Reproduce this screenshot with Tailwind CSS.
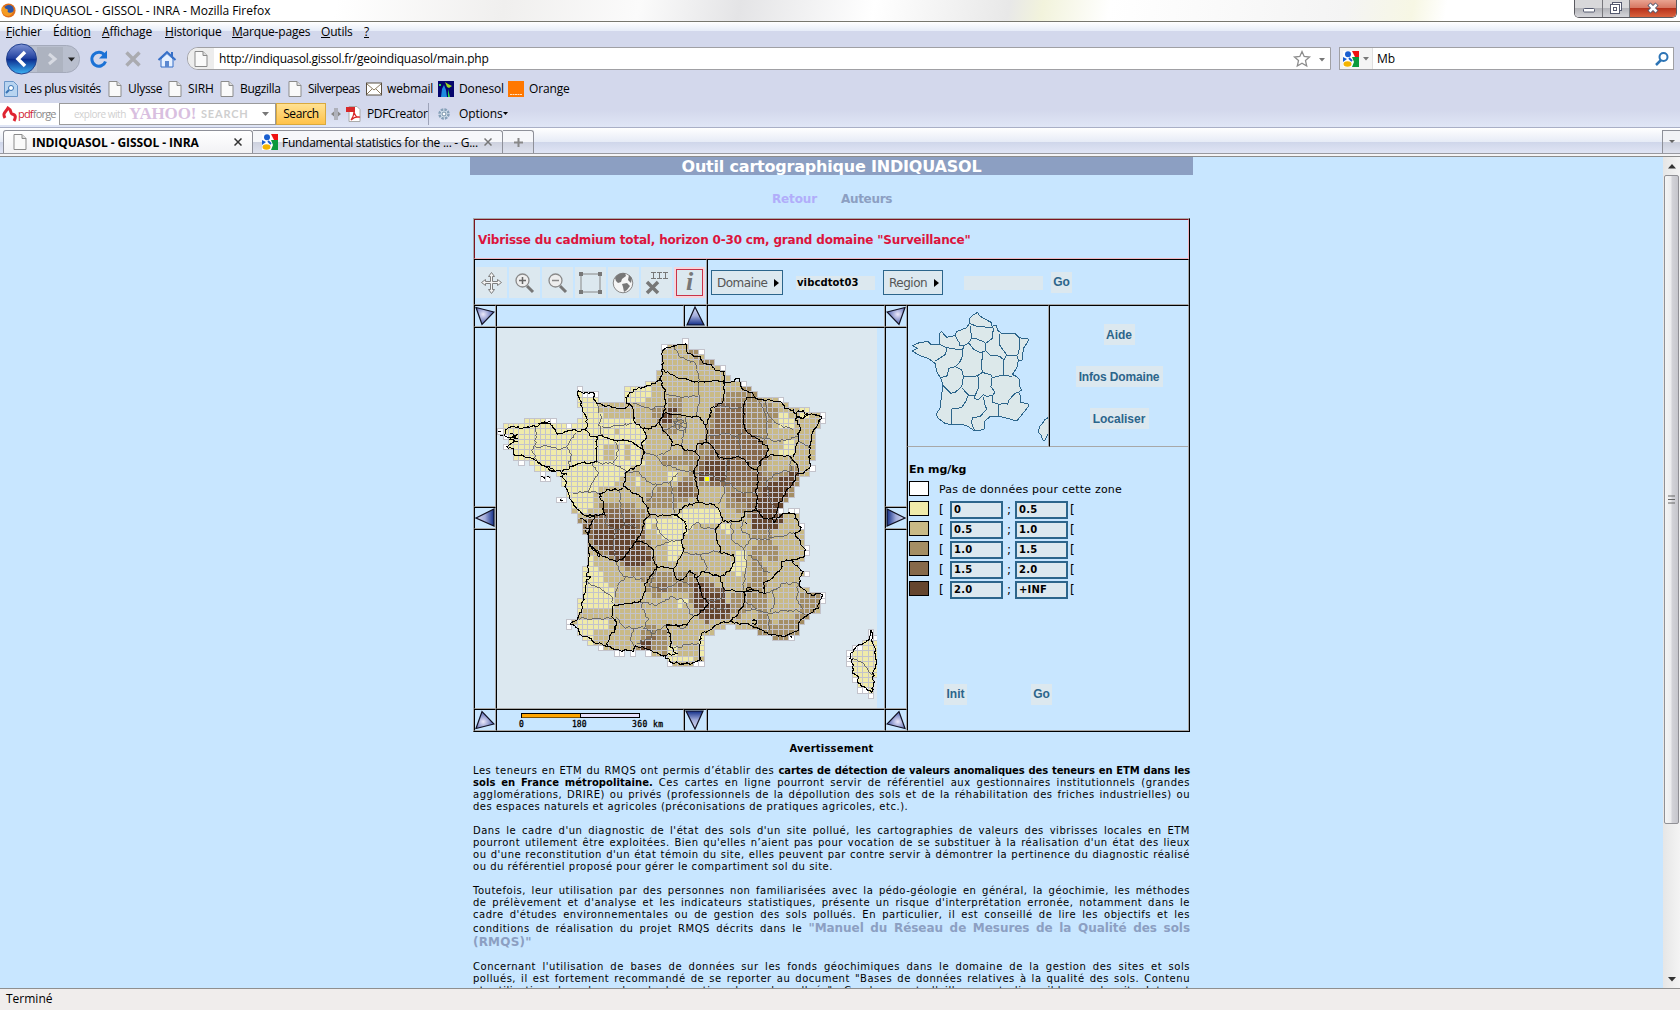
<!DOCTYPE html>
<html lang="fr">
<head>
<meta charset="utf-8">
<title>INDIQUASOL - GISSOL - INRA</title>
<script src="https://cdn.jsdelivr.net/npm/@tailwindcss/browser@4"></script>
</head>
<body class="w-[1680px] h-[1010px] overflow-hidden bg-[#c8e6ff] text-black font-['Open_Sans','Noto_Sans',sans-serif] text-[12px] leading-[16px]">
<svg width="0" height="0" class="absolute">
  <defs>
    <symbol id="page" viewBox="0 0 14 16"><path d="M1 .5h8l4 4v11H1z" fill="#fafafa" stroke="#8b8b8b"/><path d="M9 .5v4h4" fill="#ddd" stroke="#8b8b8b"/></symbol>
    <symbol id="goog" viewBox="0 0 16 16"><rect width="16" height="16" fill="#fff"/><path d="M9 0h7v6h-4z" fill="#e11"/><path d="M9 6h7v10H9l2-5z" fill="#0a9a3c"/><circle cx="5" cy="3.2" r="3" fill="#1a5fd0"/><path d="M0 6l4 2-4 3z" fill="#1a5fd0"/><ellipse cx="4.500" cy="13" rx="4" ry="2.700" fill="#f4b400"/><path d="M6 7l3 3" stroke="#1a5fd0" stroke-width="2"/></symbol>
    <linearGradient id="tri" x1="0" x2="1"><stop offset="0" stop-color="#d8dcf4"/><stop offset=".5" stop-color="#a3addb"/><stop offset="1" stop-color="#102c86"/></linearGradient>
    <radialGradient id="triR" cx=".4" cy=".4" r=".6"><stop offset="0" stop-color="#ece9fb"/><stop offset="1" stop-color="#4c5fae"/></radialGradient>
    <symbol id="aLeft" viewBox="0 0 20 20"><path d="M1 10L19 1v17z" fill="url(#tri)" stroke="#112" stroke-width="1.200"/></symbol>
    <symbol id="aCorner" viewBox="0 0 20 20"><path d="M1 1.500L19 6 7 18.500z" fill="url(#triR)" stroke="#112" stroke-width="1.200"/></symbol>
    <linearGradient id="back" x1="0" y1="0" x2="0" y2="1"><stop offset="0" stop-color="#7e93d6"/><stop offset=".48" stop-color="#21419f"/><stop offset=".5" stop-color="#0b2a8d"/><stop offset="1" stop-color="#3bb4f4"/></linearGradient>
  </defs>
</svg>
<div class="flex flex-col h-[1010px]">
  <!-- title bar -->
  <div class="h-[22px] shrink-0 flex items-start justify-between border-b border-[#77776f] bg-[linear-gradient(100deg,#fff_0%,#fff_20%,#f0efee_30%,#fbfbfb_38%,#e4e4e6_44%,#fff_52%,#e8e8e8_60%,#f2f3dc_62%,#fff_66%,#f4f4f4_80%,#f7f7e4_84%,#fff_86%)]">
    <div class="flex items-center h-[21px] pl-px gap-[4px]">
      <svg width="15" height="15" viewBox="0 0 16 16"><circle cx="8" cy="8" r="7.500" fill="#e0701a"/><circle cx="8.500" cy="7" r="5" fill="#2d56a8"/><path d="M1 4c2 0 3 1 4 2 2 0 3 1 2 3 1 2 4 2 6 0-1 4-5 6-9 4C1 11 0 8 1 4z" fill="#f59b22"/></svg>
      <span class="tracking-[-0.03px] whitespace-nowrap">INDIQUASOL - GISSOL - INRA - Mozilla Firefox</span>
    </div>
    <div class="flex h-[18px] w-[103px] mr-[3px] rounded-b-[5px] overflow-hidden border border-t-0 border-[#5a5a60]">
      <div class="w-[28px] bg-[linear-gradient(#d8d8da_45%,#b3b4b9_50%,#d5d5da)] border-r border-[#77777c] flex justify-center"><svg width="14" height="16" viewBox="0 0 14 16"><rect x="1.500" y="8.500" width="11" height="3.500" rx="1" fill="#fff" stroke="#555a70"/></svg></div>
      <div class="w-[27px] bg-[linear-gradient(#d8d8da_45%,#b3b4b9_50%,#d5d5da)] border-r border-[#77777c] flex justify-center"><svg width="14" height="16" viewBox="0 0 14 16" fill="#fff" stroke="#555a70"><rect x="3.500" y="2.500" width="9" height="8"/><rect x="1.500" y="4.500" width="9" height="9"/><rect x="4.500" y="7.500" width="3" height="3"/></svg></div>
      <div class="grow bg-[linear-gradient(#e9a391_0%,#d77863_45%,#b8321c_50%,#d9623d)] flex justify-center"><svg width="14" height="16" viewBox="0 0 14 16"><path d="M3 4l8 8M11 4l-8 8" stroke="#555a70" stroke-width="4.500"/><path d="M3.500 4.500l7 7M10.500 4.500l-7 7" stroke="#fff" stroke-width="2.500"/></svg></div>
    </div>
  </div>
  <!-- toolbars -->
  <div class="h-[106px] shrink-0 flex flex-col border-b border-[#a9afc6] bg-[linear-gradient(#fff_0px,#e6ecf8_9px,#d3d8ec_9px,#d3d8ec_88px,#e0e6f6_105px)]">
    <div class="h-[20px] flex items-center pl-[6px] whitespace-nowrap tracking-[-0.2px]">
      <span class="w-[47px]"><u>F</u>ichier</span><span class="w-[49px]">Éditio<u>n</u></span><span class="w-[63px]"><u>A</u>ffichage</span><span class="w-[67px]"><u>H</u>istorique</span><span class="w-[89px]"><u>M</u>arque-pages</span><span class="w-[43px]"><u>O</u>utils</span><span><u>?</u></span>
    </div>
    <div class="h-[32px] flex items-center pl-[3px] pt-px">
      <svg class="shrink-0" width="184" height="32" viewBox="3 42 184 32">
        <rect x="8" y="44.500" width="71.500" height="27" rx="13" fill="#b9bfce" stroke="#a4aabb"/>
        <path d="M37 46h26v25H37z" fill="#adb3c0"/><path d="M49 53l6 5-6 5" fill="none" stroke="#d7dae2" stroke-width="3"/>
        <path d="M68 56.500h7l-3.500 4z" fill="#222"/>
        <circle cx="21.500" cy="58" r="15" fill="url(#back)" stroke="#22418e"/><path d="M25 51l-7 7 7 7" fill="none" stroke="#fff" stroke-width="3.500"/>
        <path d="M104.500 54a7 7 0 1 0 1 6.500" fill="none" stroke="#1b72d6" stroke-width="3"/><path d="M107 49.500v8h-8z" fill="#1b72d6"/>
        <path d="M126.500 51.500l13 13M139.500 51.500l-13 13" stroke="#aaabb0" stroke-width="3.500"/>
        <path d="M158.500 59l8.500-8 8.500 8" fill="none" stroke="#356fc8" stroke-width="2"/><path d="M161 58l6-5.500 6 5.500v8h-12z" fill="#e6f0ff" stroke="#356fc8"/><path d="M165 60h4v6h-4z" fill="#5b88d0"/><path d="M171 51h2v4h-2z" fill="#356fc8"/>
      </svg>
      <div class="w-[1144px] h-[23px] shrink-0 flex items-center bg-white border border-[#a0a0a4] rounded-l-[11px]">
        <div class="w-[26px] h-full rounded-l-[10px] bg-[#ededed] flex items-center justify-center"><svg width="14" height="16"><use href="#page"/></svg></div>
        <span class="pl-[5px] grow whitespace-nowrap tracking-[-0.22px]">http://indiquasol.gissol.fr/geoindiquasol/main.php</span>
        <svg width="38" height="20" viewBox="0 0 38 20"><path d="M10 2.500l2.200 5 5.300.5-4 3.600 1.200 5.400L10 14.200 5.300 17l1.200-5.400L2.500 8l5.300-.5z" fill="#fff" stroke="#8d8d8d" stroke-width="1.300"/><path d="M27 9h6l-3 3.500z" fill="#777"/></svg>
      </div>
      <div class="ml-[8px] w-[335px] h-[23px] shrink-0 flex items-center bg-white border border-[#a0a0a4]">
        <div class="w-[33px] h-full border-r border-[#e0e0e0] bg-[#f4f4f4] flex items-center pl-[3px] gap-[4px]"><svg width="16" height="16"><use href="#goog"/></svg><svg width="6" height="4"><path d="M0 0h6L3 3.500z" fill="#777"/></svg></div>
        <span class="pl-[4px] grow">Mb</span>
        <svg class="mr-[4px]" width="14" height="14" viewBox="0 0 14 14"><circle cx="8.500" cy="5" r="4" fill="none" stroke="#2d74b5" stroke-width="2"/><path d="M6 8l-5 5" stroke="#2d74b5" stroke-width="2.500"/></svg>
      </div>
    </div>
    <div class="h-[30px] flex items-center pl-[4px] whitespace-nowrap tracking-[-0.15px]">
      <svg class="shrink-0" width="14" height="16" viewBox="0 0 14 16"><path d="M.5.500h9l4 4v11H.5z" fill="#b8d4f0" stroke="#6a96c8"/><circle cx="7" cy="7" r="2.500" fill="#fff" stroke="#3873b5"/><path d="M5 9l-3 3" stroke="#3873b5" stroke-width="2"/></svg><span class="w-[90px] pl-[6px] shrink-0 tracking-[-0.38px]">Les plus visités</span>
      <svg class="shrink-0" width="14" height="16"><use href="#page"/></svg><span class="w-[46px] pl-[6px] shrink-0 tracking-[-0.3px]">Ulysse</span>
      <svg class="shrink-0" width="14" height="16"><use href="#page"/></svg><span class="w-[38px] pl-[6px] shrink-0">SIRH</span>
      <svg class="shrink-0" width="14" height="16"><use href="#page"/></svg><span class="w-[54px] pl-[6px] shrink-0 tracking-[-0.3px]">Bugzilla</span>
      <svg class="shrink-0" width="14" height="16"><use href="#page"/></svg><span class="w-[64px] pl-[6px] shrink-0 tracking-[-0.5px]">Silverpeas</span>
      <svg class="shrink-0" width="16" height="14" viewBox="0 0 16 14"><rect x=".5" y="1" width="15" height="12" fill="#fff" stroke="#5b5040"/><path d="M1 2l7 6 7-6M1 12l5-5M15 12l-5-5" fill="none" stroke="#8b7b60"/></svg><span class="w-[56px] pl-[5px] shrink-0">webmail</span>
      <svg class="shrink-0" width="16" height="16" viewBox="0 0 16 16"><path d="M0 0h16v16H0z" fill="#05056e"/><path d="M3 16l1-8 2-4 2 5 1 7z" fill="#1c8ce0"/><path d="M7 1l3 2 4 2-3 2-2-1z" fill="#9ad820"/><path d="M10 8l2 8h-2zM1 3h2v2H1z" fill="#2fd84a"/></svg><span class="w-[54px] pl-[5px] shrink-0">Donesol</span>
      <svg class="shrink-0" width="16" height="16" viewBox="0 0 16 16"><path d="M0 0h16v16H0z" fill="#ff7800"/><path d="M2 13.500h12" stroke="#ffe2c4" stroke-dasharray="2 .5"/></svg><span class="pl-[5px]">Orange</span>
    </div>
    <div class="h-[22px] -mt-px flex items-center whitespace-nowrap tracking-[-0.1px]">
      <div class="w-[59px] h-[22px] shrink-0 bg-white flex items-center pl-[2px] gap-px text-[11px] tracking-[-0.8px] text-[#8a8a8a]"><svg class="shrink-0" width="15" height="16" viewBox="0 0 15 16"><path d="M3 12C0 7 4 6 6 2c4 2 2 5 4 6 4 1 4 3 2 7" fill="none" stroke="#df2430" stroke-width="3"/></svg><span><span class="text-[#d02030]">pdf</span>forge</span></div>
      <div class="w-[217px] h-[22px] shrink-0 bg-white border border-[#9a9a9a] flex items-center pl-[14px] text-[#cfcfcf]">
        <span class="text-[10px] w-[55px] tracking-[-0.5px]">explore with</span>
        <span class="font-['Liberation_Serif',serif] font-bold text-[17px] text-[#d9bfe0] w-[72px] tracking-[-0.2px]">YAHOO!</span>
        <span class="font-['Lato',sans-serif] font-bold text-[11px] w-[61px] tracking-[0.8px]">SEARCH</span>
        <svg width="7" height="4"><path d="M0 0h7L3.500 4z" fill="#777"/></svg>
      </div>
      <div class="w-[50px] h-[22px] shrink-0 border border-[#d9a93e] bg-[linear-gradient(#ffe192,#ffc24a)] text-center leading-[19px] tracking-[-0.4px]">Search</div>
      <svg class="shrink-0 ml-[4px]" width="12" height="14" viewBox="0 0 12 14"><path d="M5 1v12M7 1v12" stroke="#888"/><path d="M4 4.500v5L1 7zM8 4.500v5L11 7z" fill="#888"/></svg>
      <svg class="shrink-0 ml-[4px]" width="16" height="16" viewBox="0 0 16 16"><path d="M3 .5h8l3 3v12H3z" fill="#fff" stroke="#aaa"/><path d="M0 1h9v5H0z" fill="#d8282a"/><path d="M5 14c2-3 3-6 3-8 1 4 3 6 6 5-3-.5-6 0-9 3z" fill="none" stroke="#d8282a" stroke-width="1.200"/></svg>
      <span class="w-[66px] pl-[5px] shrink-0 tracking-[-0.4px]">PDFCreator</span>
      <div class="w-px h-[22px] bg-[#9da3b8] shrink-0"></div>
      <svg class="shrink-0 ml-[8px]" width="14" height="14" viewBox="0 0 14 14"><circle cx="7" cy="7" r="4.500" fill="#dbe8f2" stroke="#86a0b8" stroke-width="2.500" stroke-dasharray="2.500 1"/><circle cx="7" cy="7" r="2" fill="#fff" stroke="#6f8ca5"/></svg>
      <span class="pl-[5px] ml-[3px]">Options</span><svg width="5" height="4"><path d="M0 0h5L2.500 3z"/></svg>
    </div>
  </div>
  <!-- tab strip -->
  <div class="h-[29px] shrink-0 border-b border-[#8c8c8c] bg-[#f4f4f6]">
    <div class="h-[26px] flex items-end border-b border-[#9899a0] bg-[linear-gradient(#fff_0px,#e6ebf6_14px,#cfd6ea_14px,#e0e5f5_25px)] whitespace-nowrap">
      <div class="ml-[3px] w-[250px] h-[23px] flex items-center bg-[linear-gradient(#fff,#f2f2f4)] border border-b-0 border-[#8e9099] rounded-t-[3px] pl-[9px] font-bold">
        <svg class="shrink-0" width="14" height="16"><use href="#page"/></svg><span class="pl-[5px] pt-px w-[207px] tracking-[-0.08px]">INDIQUASOL - GISSOL - INRA</span>
        <svg width="8" height="8" viewBox="0 0 8 8"><path d="M.5.500l7 7M7.500.500l-7 7" stroke="#333" stroke-width="1.500"/></svg>
      </div>
      <div class="w-[250px] h-[23px] flex items-center border border-l-0 border-b-0 border-[#8e9099] rounded-tr-[3px] pl-[9px] bg-[linear-gradient(#f6f7fa_48%,#cdd1de_50%,#dfe2ee)]">
        <svg class="shrink-0" width="16" height="16"><use href="#goog"/></svg><span class="pl-[4px] pt-px w-[206px] tracking-[-0.28px]">Fundamental statistics for the ... - G...</span>
        <svg width="8" height="8" viewBox="0 0 8 8"><path d="M.5.500l7 7M7.500.500l-7 7" stroke="#777" stroke-width="1.500"/></svg>
      </div>
      <div class="w-[31px] h-[23px] flex items-center justify-center border border-l-0 border-b-0 border-[#8e9099] rounded-tr-[3px] bg-[linear-gradient(#f6f7fa_48%,#cdd1de_50%,#dfe2ee)]"><svg width="9" height="9"><path d="M4.500 0v9M0 4.500h9" stroke="#888" stroke-width="2"/></svg></div>
      <div class="ml-auto w-[18px] h-[23px] flex items-center justify-center border border-r-0 border-b-0 border-[#8e9099] bg-[linear-gradient(#f1f2f6_48%,#c9cddb_50%,#dfe2ee)]"><svg width="6" height="4"><path d="M0 0h6L3 3z" fill="#666"/></svg></div>
    </div>
  </div>
  <!-- page -->
  <div class="h-[831px] shrink-0 flex overflow-hidden font-['DejaVu_Sans',sans-serif]">
    <div class="w-[1663px] h-full shrink-0 pl-[470px]">
      <div class="w-[723px] h-[18px] bg-[#8c9fc2] text-white font-bold text-[16px] leading-[19px] text-center tracking-[-0.2px] whitespace-nowrap">Outil cartographique INDIQUASOL</div>
      <div class="w-[723px] h-[43px] pt-[17px] flex pl-[302px] gap-[24px] font-bold text-[12px] leading-[15px]"><span class="text-[#b1adfa] tracking-[-0.15px]">Retour</span><span class="text-[#8c9fc2] tracking-[-0.3px]">Auteurs</span></div>
      <div class="ml-[3px] w-[717px] h-[514px] border border-t-[#a8a8a8] border-l-[#a8a8a8] border-r-black border-b-black">
        <div class="h-[40px] border border-t-[#7c1420] border-l-[#7c1420] border-r-[#f3b5bf] border-b-[#f3b5bf] text-[#dc143c] font-bold text-[12px] leading-[40px] pl-[3px] tracking-[-0.18px] whitespace-nowrap">Vibrisse du cadmium total, horizon 0-30 cm, grand domaine "Surveillance"</div>
        <div class="h-[46px] flex">
          <div class="w-[233px] border border-t-black border-l-black border-r-[#a8a8a8] border-b-[#a8a8a8] flex items-center gap-[2px] pl-px pt-px">
            <svg class="bg-[#dce8ef] shrink-0" width="31" height="31" viewBox="0 0 31 31"><path d="M15.500 5.500l3 4h-2v5h5v-2l4 3-4 3v-2h-5v6h2l-3 4-3-4h2v-6h-5v2l-4-3 4-3v2h5v-5h-2z" fill="#f4f4f4" stroke="#7f7f7f"/></svg>
            <svg class="bg-[#dce8ef] shrink-0" width="31" height="31" viewBox="0 0 31 31"><path d="M18 19l6 6" stroke="#777" stroke-width="3"/><circle cx="13.500" cy="13.500" r="6.500" fill="#eee" stroke="#8a8a8a" stroke-width="1.300"/><path d="M13.500 10v7M10 13.500h7" stroke="#666" stroke-width="1.500"/></svg>
            <svg class="bg-[#dce8ef] shrink-0" width="31" height="31" viewBox="0 0 31 31"><path d="M18 19l6 6" stroke="#777" stroke-width="3"/><circle cx="13.500" cy="13.500" r="6.500" fill="#eee" stroke="#8a8a8a" stroke-width="1.300"/><path d="M10 13.500h7" stroke="#888" stroke-width="1.500"/></svg>
            <svg class="bg-[#dce8ef] shrink-0" width="31" height="31" viewBox="0 0 31 31"><rect x="6" y="7" width="19" height="18" fill="none" stroke="#888"/><path d="M4 5h4v4H4zM23 5h4v4h-4zM4 23h4v4H4zM23 23h4v4h-4z" fill="#777"/></svg>
            <svg class="bg-[#dce8ef] shrink-0" width="31" height="31" viewBox="0 0 31 31"><circle cx="15" cy="16" r="9.800" fill="#f5f5f5" stroke="#888"/><path d="M7 11c2-4 6-5 10-5l1 3-4 3-1 3-3 1-2-2zM14 17l5-1 3 3-3 4-3 2-1-5zM21 8l3 3-1 5-3-3z" fill="#777"/></svg>
            <svg class="bg-[#dce8ef] shrink-0" width="31" height="31" viewBox="0 0 31 31"><path d="M6 15l11 11M17 15L6 26" stroke="#777" stroke-width="3.500"/><path d="M10 5.500h5M10 11.500h5M12.500 5v7M16 5.500h5M18.500 5v7M16 11.500h5M22 5.500h5M22 11.500h5M24.500 5v7" fill="none" stroke="#777"/></svg>
            <div class="w-[31px] h-[31px] shrink-0 bg-[#f6d5dc] p-[2px] flex"><div class="w-[27px] h-[27px] border border-[#c8324a] bg-[#dce8ef] text-center font-['Liberation_Serif',serif] italic font-bold text-[26px] leading-[24px] text-[#777]">i</div></div>
          </div>
          <div class="w-[482px] border border-t-black border-l-black border-r-[#a8a8a8] border-b-[#a8a8a8] flex items-center pl-[3px] pt-px text-[12px] text-[#555]">
            <div class="w-[72px] h-[25px] shrink-0 border border-[#2c658b] bg-[#dce8ef] flex items-center justify-between pl-[5px] pr-[3px]"><span class="tracking-[-0.5px]">Domaine</span><svg width="5" height="8"><path d="M0 0v8l5-4z"/></svg></div>
            <div class="ml-[13px] w-[79px] h-[14px] shrink-0 bg-[#dce8ef] font-bold text-black text-[10px] leading-[14px] pl-px tracking-[0.1px]">vibcdtot03</div>
            <div class="ml-[8px] w-[60px] h-[25px] shrink-0 border border-[#2c658b] bg-[#dce8ef] flex items-center justify-between pl-[5px] pr-[3px]"><span class="tracking-[-0.5px]">Region</span><svg width="5" height="8"><path d="M0 0v8l5-4z"/></svg></div>
            <div class="ml-[21px] w-[79px] h-[14px] shrink-0 bg-[#dce8ef]"></div>
            <div class="ml-[8px] w-[21px] h-[21px] shrink-0 bg-[#dce8ef] font-['Liberation_Sans',sans-serif] font-bold text-[12px] leading-[21px] text-center text-[#2c658b]">Go</div>
          </div>
        </div>
        <div class="flex h-[426px]">
          <div class="w-[433px] grid grid-cols-[22px_389px_22px] grid-rows-[22px_382px_22px] [&_.c]:border [&_.c]:border-t-black [&_.c]:border-l-black [&_.c]:border-r-[#a8a8a8] [&_.c]:border-b-[#a8a8a8]">
            <div class="c"><svg width="20" height="20"><use href="#aCorner"/></svg></div>
            <div class="flex"><div class="c w-[188px]"></div><div class="c w-[23px]"><svg class="rotate-90" width="20" height="20"><use href="#aLeft"/></svg></div><div class="c w-[178px]"></div></div>
            <div class="c"><svg class="-scale-x-100" width="20" height="20"><use href="#aCorner"/></svg></div>
            <div class="flex flex-col"><div class="c h-[180px]"></div><div class="c h-[22px]"><svg width="20" height="20"><use href="#aLeft"/></svg></div><div class="c h-[180px]"></div></div>
            <div class="c"><svg id="map" class="bg-[#dce8f0]" width="380" height="380" viewBox="0 0 380 380"></svg></div>
            <div class="flex flex-col"><div class="c h-[180px]"></div><div class="c h-[22px]"><svg class="-scale-x-100" width="20" height="20"><use href="#aLeft"/></svg></div><div class="c h-[180px]"></div></div>
            <div class="c"><svg class="-scale-y-100" width="20" height="20"><use href="#aCorner"/></svg></div>
            <div class="flex"><div class="c w-[188px]">
              <svg width="186" height="20" viewBox="497 710 186 20" class="font-['DejaVu_Sans_Mono',monospace] text-[8px]"><rect x="521.500" y="713.500" width="118" height="4" fill="#e4e0fa" stroke="#000"/><rect x="522" y="714" width="58" height="3.500" fill="#ffa500"/><path d="M580.500 713v5" stroke="#000"/><g stroke="#000" stroke-width=".3"><text x="519" y="727">0</text><text x="572" y="727">180</text><text x="632" y="727" textLength="31">360 km</text></g></svg>
            </div><div class="c w-[23px]"><svg class="-rotate-90" width="20" height="20"><use href="#aLeft"/></svg></div><div class="c w-[178px]"></div></div>
            <div class="c"><svg class="-scale-100" width="20" height="20"><use href="#aCorner"/></svg></div>
          </div>
          <div class="w-[282px] flex flex-col">
            <div class="flex h-[142px]">
              <div class="w-[142px] border border-t-black border-l-black border-r-[#a8a8a8] border-b-[#a8a8a8]">
                <svg width="140" height="140" viewBox="9 3 420 420" fill="#dce8ea" stroke="#2c658b" stroke-width="3" stroke-linejoin="round" shape-rendering="crispEdges">
                  <path d="M193 40L205 30 218 22 224 33 240 42 258 52 262 68 265 62 275 62 277 75 290 85 330 86 342 98 370 102 368 112 355 130 352 165 340 165 335 190 322 208 335 215 345 225 342 240 350 255 340 262 345 268 346 292 370 297 370 305 350 330 335 348 300 338 280 333 255 335 237 350 238 372 220 378 205 375 190 365 170 357 140 360 120 355 97 338 95 325 105 310 113 245 110 225 95 200 90 175 70 160 45 152 22 138 38 130 22 122 45 112 70 110 80 120 103 118 103 85 110 80 125 97 150 92 155 80 185 68 193 55z"/>
                  <path d="M429 338l-10 6-8 14-8 6-2 18 8 10 4 12 6 4 6-12 4-10"/>
                  <path fill="none" d="M193 55L215 64 262 68M195 62L198 85 200 100 190 115 176 122M200 100L215 102 240 112M265 70L262 100 242 115 240 140 225 142 205 132 192 115M150 92L162 112 165 122 176 122 173 135M103 118L125 128 150 132 173 135M125 128L122 148 92 168M173 135L172 155 165 170 152 185M152 185L130 190 128 212 108 218M152 185L170 195 175 215 170 245 150 262 138 265 113 240M175 215L200 215 218 212 222 225 220 250 210 272 190 270 170 248M232 142L232 160 228 175 232 202 218 212M240 135L255 150 270 150 285 155 297 165 295 210 262 218 258 210 232 202M285 88L284 120 305 150 297 165M305 150L335 150 340 165M342 98L345 125 338 150M295 210L322 215M260 218L258 245 270 262 262 272M190 270L182 290 170 308 140 312 138 360M210 272L208 280 220 285 235 268 245 275 262 270 262 292 282 298M235 275L240 300 245 312 225 335 202 338 200 355 208 375M282 298L300 295 308 298 312 285 330 265 340 262M282 298L280 333"/>
                </svg>
              </div>
              <div class="w-[140px] border border-t-black border-l-black border-r-[#a8a8a8] border-b-[#a8a8a8] pt-[18px] flex flex-col items-center gap-[21px] font-['Liberation_Sans',sans-serif] font-bold text-[12px] leading-[22px] text-center text-[#2c658b] whitespace-nowrap">
                <div class="bg-[#dce8ef] w-[31px] h-[21px]">Aide</div><div class="bg-[#dce8ef] w-[87px] h-[21px] tracking-[-0.15px]">Infos Domaine</div><div class="bg-[#dce8ef] w-[59px] h-[21px]">Localiser</div>
              </div>
            </div>
            <div class="grow border border-t-0 border-l-black border-r-[#a8a8a8] border-b-[#a8a8a8] pl-px pt-[14px] text-[11px] leading-[16px]">
              <div class="h-[19px] leading-[17px] font-bold tracking-[-0.05px]">En mg/kg</div>
              <div class="flex items-center h-[20px]"><div class="w-[20px] h-[15px] mb-[3px] border border-black bg-white"></div><span class="pl-[10px] mb-px tracking-[0.22px] whitespace-nowrap">Pas de données pour cette zone</span></div>
              <div id="legend"></div>
              <div class="flex pt-[84px] pl-[35px] gap-[64px] font-['Liberation_Sans',sans-serif] font-bold text-[12px] leading-[21px] text-center text-[#2c658b]"><div class="bg-[#dce8ef] w-[23px] h-[21px]">Init</div><div class="bg-[#dce8ef] w-[21px] h-[21px]">Go</div></div>
            </div>
          </div>
        </div>
      </div>
      <div class="ml-[3px] w-[717px] pt-[11px] text-[10px] leading-[12px] text-[#000] tracking-[0.52px] whitespace-nowrap [&_p]:mb-[12px] [&_i]:block [&_i]:not-italic [&_i]:h-[12px] [&_.j]:[text-align-last:justify]">
        <div class="text-center font-bold mb-[10px] tracking-[0.2px]">Avertissement</div>
        <p><i class="j">Les teneurs en ETM du RMQS ont permis d’établir des <b class="tracking-[-0.1px]">cartes de détection de valeurs anomaliques des teneurs en ETM dans les</b></i><i class="j"><b class="tracking-[0.05px]">sols en France métropolitaine.</b> Ces cartes en ligne pourront servir de référentiel aux gestionnaires institutionnels (grandes</i><i class="j">agglomérations, DRIRE) ou privés (professionnels de la dépollution des sols et de la réhabilitation des friches industrielles) ou</i><i>des espaces naturels et agricoles (préconisations de pratiques agricoles, etc.).</i></p>
        <p><i class="j">Dans le cadre d'un diagnostic de l'état des sols d'un site pollué, les cartographies de valeurs des vibrisses locales en ETM</i><i class="j">pourront utilement être exploitées. Bien qu'elles n’aient pas pour vocation de se substituer à la réalisation d'un état des lieux</i><i class="j">ou d'une reconstitution d'un état témoin du site, elles peuvent par contre servir à démontrer la pertinence du diagnostic réalisé</i><i>ou du référentiel proposé pour gérer le compartiment sol du site.</i></p>
        <p><i class="j">Toutefois, leur utilisation par des personnes non familiarisées avec la pédo-géologie en général, la géochimie, les méthodes</i><i class="j">de prélèvement et d'analyse et les indicateurs statistiques, présente un risque d'interprétation erronée, notamment dans le</i><i class="j">cadre d'études environnementales ou de gestion des sols pollués. En particulier, il est conseillé de lire les objectifs et les</i><i class="j h-[14px]! leading-[14px]">conditions de réalisation du projet RMQS décrits dans le <b class="text-[12px] text-[#8c9fc2] tracking-[-0.05px]">"Manuel du Réseau de Mesures de la Qualité des sols</b></i><i class="h-[14px]! leading-[14px]"><b class="text-[12px] text-[#8c9fc2] tracking-[0.2px]">(RMQS)"</b></i></p>
        <p><i class="j">Concernant l'utilisation de bases de données sur les fonds géochimiques dans le domaine de la gestion des sites et sols</i><i class="j">pollués, il est fortement recommandé de se reporter au document "Bases de données relatives à la qualité des sols. Contenu</i><i class="j">et utilisation dans le cadre de la gestion des sols pollués". Ce document d'ailleurs est disponible sur le site Internet</i></p>
      </div>
    </div>
    <div class="w-[17px] h-full flex flex-col items-center bg-[linear-gradient(90deg,#e6e6e6,#f4f4f4)]">
      <div class="h-[18px] w-full shrink-0 flex items-center justify-center"><svg width="8" height="5"><path d="M0 4.500h8L4 0z" fill="#333"/></svg></div>
      <div class="w-[15px] h-[649px] shrink-0 border border-[#909095] rounded-[2px] bg-[linear-gradient(90deg,#f5f5f5,#ececee_45%,#d3d3d8_55%,#c6c6cc)] flex items-center justify-center"><svg width="7" height="9"><path d="M0 1h7M0 4.500h7M0 8h7" stroke="#666" stroke-width="1.200"/></svg></div>
      <div class="mt-auto h-[18px] flex items-center"><svg width="8" height="5"><path d="M0 0h8L4 4.500z" fill="#333"/></svg></div>
    </div>
  </div>
  <div class="h-[22px] border-t border-[#8f8f8f] bg-[#f0edec] pl-[6px] leading-[20px]">Terminé</div>
</div>
<script>
// Legend classes
document.getElementById('legend').innerHTML = [
  ['#f0ebaa','0','0.5'],['#c9ba86','0.5','1.0'],['#a48e64','1.0','1.5'],['#86694a','1.5','2.0'],['#65452e','2.0','+INF']
].map(([k,a,b]) => `<div class="flex items-center h-[20px]"><div class="w-[20px] h-[15px] mb-[3px] shrink-0 border border-black" style="background:${k}"></div><span class="w-[21px] pl-[10px] text-[12px]">[</span><div class="w-[53px] h-[18px] border-2 border-[#2c658b] bg-[#dce8ef] font-bold text-[10px] leading-[14px] pl-[2px] tracking-[0.2px]">${a}</div><span class="w-[12px] text-center text-[12px]">;</span><div class="w-[53px] h-[18px] border-2 border-[#2c658b] bg-[#dce8ef] font-bold text-[10px] leading-[14px] pl-[2px] tracking-[0.2px]">${b}</div><span class="pl-[2px] text-[12px]">[</span></div>`).join('');

// Map of France: 5.29px cells; contours use a grid three times finer, offset by (81,84)
const P = s => s.trim().split(/\s+/).map(p => p.split(',').map(Number));
const inside = (x,y,p) => { let r=false; for (let i=0,j=p.length-1;i<p.length;j=i++) { const [a,b]=p[i],[c,d]=p[j]; if ((b>y)!==(d>y) && x<(c-a)*(y-b)/(d-b)+a) r=!r; } return r; };
const land = P('574,130 650,130 652,147 684,147 684,162 700,162 700,178 730,178 730,194 762,194 762,226 778,226 778,242 810,242 810,257 842,257 842,273 858,273 858,289 938,289 938,305 954,305 954,321 1018,321 1018,337 1050,337 1050,384 1034,384 1034,480 1020,480 1020,525 986,525 986,558 970,558 970,590 954,590 954,606 938,606 938,640 985,640 985,685 1000,685 1000,781 975,781 1000,813 1000,829 990,829 990,860 1018,860 1018,876 1050,876 1050,940 1034,940 1018,956 1002,972 986,985 986,1003 954,1003 954,1019 906,1019 906,1003 858,1003 858,987 795,987 795,970 763,970 763,987 747,987 732,1003 700,1003 700,1083 684,1098 590,1098 590,1083 574,1067 510,1052 420,1056 385,1036 350,1036 350,1018 318,1003 318,975 300,972 318,950 318,905 334,890 334,795 350,795 356,700 334,700 334,670 318,655 318,640 303,630 303,605 287,590 287,560 271,545 271,530 240,515 200,505 192,495 160,480 130,470 128,455 108,445 108,425 97,410 97,385 108,368 160,368 160,352 255,352 255,368 318,368 335,352 335,325 318,305 318,275 380,275 380,305 462,305 462,275 478,257 525,257 525,241 557,241 557,210 574,210');
const corsica = P('1160,1035 1190,1020 1190,990 1222,1004 1222,1120 1208,1160 1200,1180 1165,1162 1150,1130 1140,1090 1140,1050');
const zones = [
 [0,'80,350 320,350 320,270 380,275 385,320 400,360 490,360 520,385 530,410 515,440 520,490 470,510 430,545 430,560 375,570 370,620 340,640 300,610 260,560 260,510 80,500'],
 [1,'385,320 440,320 440,335 400,345 385,335'],[1,'430,385 445,385 445,400 430,400'],[1,'400,430 442,430 430,480 395,485'],[1,'455,430 485,430 485,480 460,480'],
 [0,'468,257 545,241 545,273 535,290 520,305 468,305'],
 [0,'330,795 385,795 400,830 430,880 425,930 380,925 320,935 335,850'],[0,'350,765 370,765 370,795 350,795'],
 [0,'320,950 420,955 415,985 370,985 365,1030 350,1030 310,985'],
 [0,'560,655 620,645 640,625 750,615 755,665 690,665 650,690 630,740 630,765 605,785 590,780 590,725 565,700'],
 [0,'520,650 560,655 560,675 525,680'],[0,'750,665 780,665 775,700 750,690'],
 [0,'800,745 835,760 835,810 795,830 780,810'],
 [0,'925,335 970,350 970,390 925,390'],[0,'945,410 970,410 965,460 925,460'],[0,'985,325 1018,325 1018,350 985,350'],
 [0,'590,515 620,510 620,545 595,545'],[0,'590,1070 665,1065 660,1090 590,1085'],[0,'495,530 510,530 510,560 495,560'],
 [0,'620,895 640,880 650,910 620,925'],[0,'595,1035 615,1035 615,1065 595,1065'],[0,'685,1010 700,1010 700,1070 685,1070'],
 [2,'590,290 635,290 640,335 560,375 530,330 590,320'],[2,'565,345 640,345 640,375 590,410 570,380'],
 [2,'650,147 684,147 684,162 690,178 730,178 730,194 690,190 660,165'],[2,'812,255 842,257 845,273 860,290 840,290 815,270'],
 [2,'745,290 790,270 860,290 920,320 920,340 890,410 890,470 985,490 985,560 950,600 905,700 930,790 860,760 850,700 830,640 770,620 760,580 690,570 675,590 620,620 530,620 530,580 560,565 640,545 650,500 575,490 575,465 680,450 700,400 715,350'],
 [1,'895,475 965,475 960,505 895,510'],[1,'775,585 840,590 840,610 800,610'],[1,'690,560 760,560 760,600 690,600'],
 [3,'740,310 820,310 825,380 880,430 890,480 850,500 860,580 860,640 800,600 760,560 690,545 680,500 720,460 715,400 740,350'],
 [3,'620,545 670,545 680,590 620,590'],[2,'770,555 850,555 850,585 770,580'],
 [4,'700,480 775,480 775,510 750,550 690,550 690,520 700,515'],
 [4,'985,510 950,590 920,640 960,650 905,690 850,680 850,650 865,600 890,550 950,520'],[3,'860,510 890,540 870,590 855,640 850,570'],
 [2,'390,610 460,600 540,640 520,690 545,740 560,800 530,840 480,830 440,790 340,730 320,660 400,650'],
 [3,'400,625 470,620 500,650 520,690 550,770 490,800 440,780 360,720 340,670'],
 [4,'420,650 500,655 500,715 540,765 530,795 480,795 440,775 375,735 360,680 420,680'],
 [4,'590,320 615,320 620,340 590,345'],[4,'575,345 600,345 600,375 575,370'],[3,'740,310 800,310 800,330 745,330'],
 [2,'540,810 600,810 690,820 760,870 770,960 700,960 665,920 640,870 540,890 525,860'],
 [3,'560,845 590,845 590,875 560,875'],[3,'620,845 640,845 640,860 620,860'],
 [3,'660,850 700,840 765,870 780,950 700,970 665,910'],
 [4,'670,850 710,855 720,880 765,865 775,930 770,950 710,950 670,920'],
 [2,'780,880 890,880 900,970 990,940 990,880 1050,880 1045,930 1018,950 980,1000 950,1015 905,1015 850,990 860,930 825,930 815,960 790,960'],
 [2,'850,740 890,730 880,790 900,830 880,870 825,870 850,830'],
 [2,'520,975 590,985 585,1060 500,1045'],[4,'505,1020 540,1020 540,1055 505,1045'],[3,'520,1000 555,1000 555,1020 520,1020'],
].map(([k,s]) => [k,P(s)]);
const fills = ['#f0ebaa','#c9ba86','#a48e64','#86694a','#65452e'];
const white = P('574,130 637,115 684,147 747,194 810,242 922,289 1050,337 1050,353 1018,495 970,622 954,622 922,622 985,670 1002,733 1002,749 1002,813 1050,876 1050,892 319,257 335,273 351,273 367,273 82,385 98,400 98,432 145,480 208,511 208,527 224,527 256,590 272,590 287,368 240,353 224,353 287,956 287,972 383,1035 430,1050 446,1050 478,1050 526,1050 590,1083 668,1083 684,1083 954,1003 1192,988 1192,1004 1208,1004 1129,1050 1129,1066 1129,1082 1145,1035 1160,1035 1145,1130 1160,1162 1176,1162 1192,1177');
const pitch = 15.87, key = (c,r) => c+'_'+r, cells = {};
for (let r=0;r<69;r++) for (let c=0;c<73;c++) {
  const x=82+pitch*(c+.5), y=115+pitch*(r+.5);
  if (inside(x,y,corsica)) cells[key(c,r)]=fills[0];
  else if (inside(x,y,land)) { let k=1; for (const [z,p] of zones) if (inside(x,y,p)) k=z; cells[key(c,r)]=fills[k]; }
}
for (const [x,y] of white) cells[key(Math.round((x-82)/pitch),Math.round((y-115)/pitch))]='#fff';
cells[key(39,26)]='#ff0';
let back='', front='';
for (const k in cells) {
  const [c,r]=k.split('_').map(Number), X=n=>Math.round((1+pitch*n)/3), Y=n=>Math.round((31+pitch*n)/3);
  back+=`<rect x="${X(c)}" y="${Y(r)}" width="${X(c+1)-X(c)+1}" height="${Y(r+1)-Y(r)+1}" fill="#c3c3cb"/>`;
  front+=`<rect x="${X(c)+1}" y="${Y(r)+1}" width="${X(c+1)-X(c)-1}" height="${Y(r+1)-Y(r)-1}" fill="${cells[k]}"/>`;
}
let seed=7; const rnd=()=>(seed=(seed*16807)%2147483647)/2147483647-.5;
const rough = (s,amp) => { const p=P(s); let d='M'+p[0]; for (let i=1;i<p.length;i++) { const [a,b]=p[i-1],[c,e]=p[i], L=Math.hypot(c-a,e-b), n=Math.max(1,Math.round(L/7)); for (let t=1;t<n;t++) d+=` L${(a+(c-a)*t/n+rnd()*amp).toFixed(1)},${(b+(e-b)*t/n+rnd()*amp).toFixed(1)}`; d+=` L${c},${e}`; } return d; };
const black = [
 '648,131 610,138 585,145 577,155 578,180 575,210 578,222 568,240 555,250 530,258 505,263 480,278 468,292 470,310 478,310 465,325 440,325 400,316 382,312 372,298 375,285 370,278 340,280 325,272 323,285 330,300 338,325 348,350 350,392 335,388 325,395 310,388 285,395 262,402 250,385 240,370 215,368 205,378 190,376 165,383 130,380 110,388 103,405 120,412 140,405 120,418 145,425 125,430 110,440 130,447 130,462 150,466 170,472 195,480 215,495 235,505 245,515 270,510 275,520 290,522 270,530 290,545 285,560 295,580 305,605 325,630 350,648 375,652 365,665 358,690 356,710 358,730 390,770 358,735 355,780 350,830 362,830 350,840 345,880 335,930 322,960 300,972 325,985 330,1003 360,1015 380,1030 412,1040 435,1050 460,1052 492,1053 495,1038 520,1043 545,1052 565,1060 585,1068 600,1085 640,1092 665,1090 690,1080 690,1050 688,1020 695,1000 720,990 750,970 780,965 805,970 840,975 865,985 885,998 905,1005 940,1010 965,1000 985,990 985,970 1005,950 1045,925 1050,900 1058,885 1045,880 1025,885 1000,868 988,850 992,830 1000,815 975,795 965,780 1003,770 1003,745 990,720 975,700 992,690 985,665 970,640 945,640 920,655 912,668 905,655 920,640 925,610 945,585 955,565 970,545 983,520 1000,520 1018,505 1020,475 1018,450 1030,390 1055,350 1040,345 1010,340 1000,355 980,350 970,330 945,325 930,305 900,300 880,300 855,293 850,285 835,275 815,265 808,235 800,235 795,245 762,250 762,215 735,210 725,195 700,192 690,168 672,170 650,155 648,131',
 '575,207 600,222 635,235 665,243 700,245 745,243 763,248','568,235 583,265 588,310 582,340 620,343 650,350 685,350 707,376','763,250 760,300 740,320 722,325 720,350 707,375',
 '478,310 487,320 490,360 520,388 555,380 582,345','582,342 568,360 578,390 600,415 605,435 635,437 645,452 675,455 683,432 710,428 712,400 707,378',
 '855,293 830,292 820,320 820,370 830,395 860,415 885,435 895,450 885,472 870,485 862,508','710,428 735,450 748,475 800,470 825,480 845,505 862,508',
 '885,472 905,463 960,470 980,490 985,515','980,350 975,360 990,375 985,420 972,470','862,508 865,545 855,570 862,590 858,625 880,655 905,655',
 '675,455 688,470 680,500 672,520 682,560 685,608 725,612 745,625 760,665 790,665 815,660 825,635 858,632',
 '520,388 530,410 515,430 522,460 510,495 470,515 462,560 480,570 510,590 530,620 540,645 620,645 640,620 685,608',
 '350,392 360,408 380,410 400,410 430,420 460,420 485,425 500,435 520,450','380,410 382,440 378,485 330,490 300,500 275,520',
 '350,648 405,645 400,620 388,580 420,570 460,565','540,645 520,665 518,690 500,720 480,745 465,770 440,785 400,770 358,735',
 '500,725 530,730 550,750 548,775 560,800 610,805 640,755 635,720 650,690 645,665 620,645','560,800 545,825 525,850 525,875 510,905 470,910 427,920 425,950 437,960 435,990 418,1010 412,1038','434,960 440,975 434,990',
 '610,805 620,838 640,838 660,810 680,835 695,815 735,825 750,830 780,812 795,785 790,765 755,760 740,720 735,690 755,665',
 '680,835 690,865 700,895 715,910 690,940 660,960 650,975 590,975 600,1010 600,1040 620,1060 580,1068',
 '750,830 765,870 820,875 850,870 885,880 880,850 900,840 935,805 935,785 965,780','820,875 825,900 805,940 780,965','830,865 842,862 845,875 832,875 830,865','845,962 860,962 855,975 845,970',
 '975,340 1000,332 1012,345 1000,355 980,352','345,682 360,685 352,700 345,690','330,655 352,668','120,400 135,410','125,420 145,415','235,508 255,512','230,500 250,505','215,528 225,535','232,530 240,532','270,600 280,604','85,394 92,396','200,482 212,490','205,370 240,366','90,405 98,408',
 '1200,990 1197,1020 1180,1030 1155,1045 1140,1075 1150,1095 1148,1120 1165,1130 1165,1150 1190,1165 1205,1178 1210,1150 1212,1110 1220,1090 1216,1050 1208,1030 1207,1000 1200,990','1205,1165 1205,1178','960,1008 966,1012','826,665 829,672','690,1072 696,1082'];
const gray = [
 '615,140 625,165 650,180 675,190 682,215 685,243','588,285 640,292 685,290','685,245 688,290 678,345','490,310 520,318 545,330 560,320 588,315','382,312 385,335 395,350 385,375 400,405','395,380 440,378 485,370','192,376 197,405 195,435 185,450 200,480','195,440 240,438 265,450 290,440 318,400','290,440 300,460 300,500',
 '440,425 445,450 430,490','378,487 430,492 470,515','368,490 385,520 365,550 350,575 310,580','350,575 388,580','520,455 560,470 600,450 605,435','560,470 580,495 630,510 675,515','462,520 500,515 530,545 560,555 600,545 625,520','560,555 545,590 530,605','600,545 610,590 615,640',
 '625,350 615,375 580,395','610,365 635,360 650,372 640,392 618,385 610,365','618,372 645,385','640,360 625,390','640,392 635,435','645,352 650,380 645,400',
 '745,315 790,325 820,325','715,410 770,400 800,410 820,395','800,410 812,440 805,470','868,305 885,340 890,370 888,415 850,408','885,300 895,345 920,370 970,390','888,415 930,425 985,410','985,425 1000,430 1018,445','960,470 965,510 920,520 885,550 900,600 915,620',
 '675,520 720,525 765,545 770,490 780,475','765,545 820,580 858,580','765,545 765,580 745,610','450,570 455,640 465,675 505,680','405,645 410,675 440,690 430,720 440,785','465,675 440,690','555,655 570,700 600,725 635,720','600,725 555,745','655,690 680,665 700,685 740,690','640,755 690,765 740,755 755,760','690,765 710,800 705,820',
 '780,665 790,700 785,720 820,745 845,715 900,720','820,660 815,690 845,715','900,680 895,710 940,710 970,695','820,745 830,800 820,870','835,765 860,780 880,815 900,820','345,845 380,860 420,885 430,910','440,785 450,815 470,830 520,840','470,830 440,860 435,890','320,955 380,955 425,955','560,800 540,860 580,870 630,840 660,860',
 '510,905 560,915 600,890 640,900 670,950','510,905 535,960 520,985 550,1000 590,975','437,950 460,980 490,985 520,980','490,985 480,1020 495,1040','550,990 545,1010 500,1030','610,1045 650,1035 688,1030','600,975 640,985 655,975','700,895 730,905 760,890 760,860','720,925 770,930','825,930 870,930 900,940 980,930 1005,945','895,940 900,990','825,905 860,925','885,880 910,870 940,850 985,850','910,870 915,910 900,935','985,850 980,900 1000,925','1145,1075 1180,1090 1200,1120 1212,1122'];
document.getElementById('map').innerHTML = `<g shape-rendering="crispEdges">${back}${front}</g><g shape-rendering="crispEdges" transform="scale(.333333) translate(-81 -84)" fill="none"><path stroke="#6b6b6b" stroke-width="3" d="${gray.map(s=>rough(s,8)).join('')}"/><path stroke="#000" stroke-width="3.200" d="${black.map(s=>rough(s,7)).join('')}"/></g>`;
</script>
</body>
</html>
